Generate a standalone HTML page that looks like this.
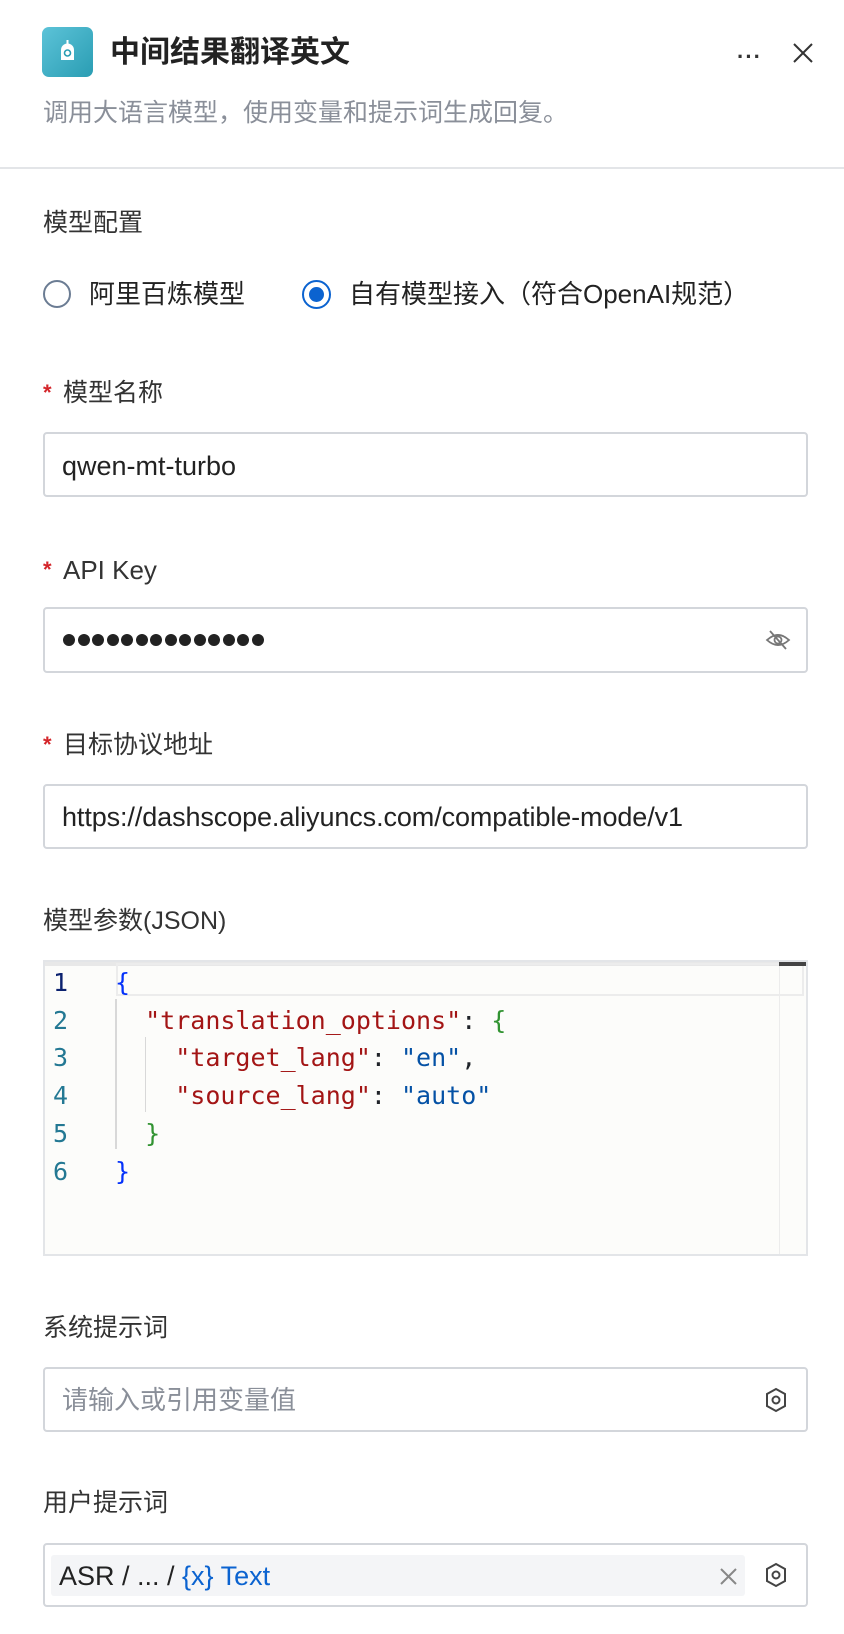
<!DOCTYPE html>
<html><head><meta charset="utf-8"><style>
*{box-sizing:border-box;margin:0;padding:0}
body{width:844px;height:1634px;background:#fff;font-family:"Liberation Sans","Noto Sans CJK SC",sans-serif;color:#1f2329;position:relative;overflow:hidden}
.a{position:absolute;white-space:nowrap}
.lbl{font-size:25px;color:#333;line-height:30px}
.box{position:absolute;left:43px;width:765px;border:2px solid #d3d6db;border-radius:4px;background:#fff}
.txt{font-size:26px;color:#222;line-height:30px}
.lat{font-size:27px;color:#222;line-height:30px}
.star{color:#d4252a;font-size:22px;font-weight:bold;position:absolute;left:0;top:0}
.mono{font-family:"DejaVu Sans Mono","Liberation Mono",monospace;font-size:25px;line-height:30px}
.ln{color:#237893}
.dots{display:flex;gap:2.5px}
.dots i{width:12px;height:12px;border-radius:50%;background:#222;display:block}
</style></head><body>
<div class="a" style="left:42px;top:27px;width:51px;height:50px;border-radius:7px;background:linear-gradient(135deg,#5cc3d8,#2a9db3)">
<svg width="51" height="50" viewBox="0 0 51 50"><path d="M19 33 V23 a6.5 6.5 0 0 1 13 0 V33 Z" fill="#fff"/><rect x="24.5" y="13" width="2" height="4" fill="#fff"/><circle cx="25.5" cy="26" r="3" fill="none" stroke="#2a9db3" stroke-width="1.6"/></svg></div>
<div class="a" style="left:110px;top:35px;font-size:30px;font-weight:bold;line-height:36px;color:#222">中间结果翻译英文</div>
<div class="a" style="left:737px;top:44px;font-size:22px;font-weight:bold;color:#333;letter-spacing:1px">···</div>
<svg class="a" style="left:792px;top:42px" width="22" height="22" viewBox="0 0 22 22"><path d="M2 2L20 20M20 2L2 20" stroke="#333" stroke-width="2"/></svg>
<div class="a" style="left:43px;top:98px;font-size:25px;color:#8a8f99;line-height:30px">调用大语言模型，使用变量和提示词生成回复。</div>
<div class="a" style="left:0;top:167px;width:844px;height:2px;background:#e3e5e8"></div>
<div class="a lbl" style="left:43px;top:208px">模型配置</div>
<div class="a" style="left:43px;top:280px;width:28px;height:28px;border:2px solid #6b7c93;border-radius:50%"></div>
<div class="a txt" style="left:89px;top:279px">阿里百炼模型</div>
<div class="a" style="left:302px;top:280px;width:29px;height:29px;border:2px solid #0b63d0;border-radius:50%"><div style="margin:5px;width:15px;height:15px;border-radius:50%;background:#0b63d0"></div></div>
<div class="a txt" style="left:349px;top:279px">自有模型接入（符合OpenAI规范）</div>

<div class="a lbl" style="left:43px;top:378px;padding-left:20px"><span class="star">*</span>模型名称</div>
<div class="box" style="top:432px;height:65px"></div>
<div class="a lat" style="left:62px;top:451px">qwen-mt-turbo</div>

<div class="a lbl" style="left:43px;top:555px;padding-left:20px;font-size:26px"><span class="star">*</span>API Key</div>
<div class="box" style="top:607px;height:66px"></div>
<div class="a dots" style="left:63px;top:634px"><i></i><i></i><i></i><i></i><i></i><i></i><i></i><i></i><i></i><i></i><i></i><i></i><i></i><i></i></div>
<svg class="a" style="left:765px;top:628px" width="26" height="24" viewBox="0 0 26 24"><path d="M2 12 Q13 2 24 12 Q13 22 2 12Z" fill="none" stroke="#777" stroke-width="1.8"/><circle cx="13" cy="12" r="3.5" fill="none" stroke="#777" stroke-width="1.8"/><path d="M5 3L21 21" stroke="#777" stroke-width="1.8"/></svg>

<div class="a lbl" style="left:43px;top:730px;padding-left:20px"><span class="star">*</span>目标协议地址</div>
<div class="box" style="top:784px;height:65px"></div>
<div class="a lat" style="left:62px;top:802px;letter-spacing:-0.1px">https://dashscope.aliyuncs.com/compatible-mode/v1</div>

<div class="a lbl" style="left:43px;top:906px">模型参数(JSON)</div>
<div class="a" style="left:43px;top:960px;width:765px;height:296px;border:2px solid #e3e5e8;background:#fcfcfa"></div>
<div class="a" style="left:45px;top:962px;width:761px;height:4px;background:#e8e8e8"></div>
<div class="a" style="left:116px;top:963px;width:688px;height:33px;border:2px solid #ececec"></div>
<div class="a" style="left:779px;top:962px;width:1px;height:292px;background:#ececec"></div>
<div class="a" style="left:779px;top:962px;width:27px;height:4px;background:#444"></div>
<div class="a" style="left:115px;top:999px;width:2px;height:150px;background:#d8d8d8"></div>
<div class="a" style="left:145px;top:1037px;width:1px;height:75px;background:#d8d8d8"></div>
<div class="a mono" style="left:53px;top:964px;line-height:37.7px">
<div style="color:#0b216f">1</div><div class="ln">2</div><div class="ln">3</div><div class="ln">4</div><div class="ln">5</div><div class="ln">6</div></div>
<div class="a mono" style="left:115px;top:964px;line-height:37.7px;white-space:pre"><div style="color:#0431fa">{</div><div>  <span style="color:#a31515">"translation_options"</span>: <span style="color:#319331">{</span></div><div>    <span style="color:#a31515">"target_lang"</span>: <span style="color:#0451a5">"en"</span>,</div><div>    <span style="color:#a31515">"source_lang"</span>: <span style="color:#0451a5">"auto"</span></div><div>  <span style="color:#319331">}</span></div><div style="color:#0431fa">}</div></div>

<div class="a lbl" style="left:43px;top:1313px">系统提示词</div>
<div class="box" style="top:1367px;height:65px"></div>
<div class="a txt" style="left:62px;top:1385px;color:#8a8f99">请输入或引用变量值</div>
<svg class="a" style="left:764px;top:1387px" width="24" height="26" viewBox="0 0 24 26"><path d="M12 2L21 7V19L12 24L3 19V7Z" fill="none" stroke="#444" stroke-width="2"/><circle cx="12" cy="13" r="3.5" fill="none" stroke="#444" stroke-width="2"/></svg>

<div class="a lbl" style="left:43px;top:1488px">用户提示词</div>
<div class="box" style="top:1543px;height:64px"></div>
<div class="a" style="left:51px;top:1555px;width:694px;height:41px;background:#f4f5f7;border-radius:3px"></div>
<div class="a lat" style="left:59px;top:1561px">ASR / ... / <span style="color:#0b63d0">{x} Text</span></div>
<svg class="a" style="left:719px;top:1567px" width="19" height="19" viewBox="0 0 19 19"><path d="M2 2L17 17M17 2L2 17" stroke="#888" stroke-width="2"/></svg>
<svg class="a" style="left:764px;top:1562px" width="24" height="26" viewBox="0 0 24 26"><path d="M12 2L21 7V19L12 24L3 19V7Z" fill="none" stroke="#444" stroke-width="2"/><circle cx="12" cy="13" r="3.5" fill="none" stroke="#444" stroke-width="2"/></svg>
</body></html>
